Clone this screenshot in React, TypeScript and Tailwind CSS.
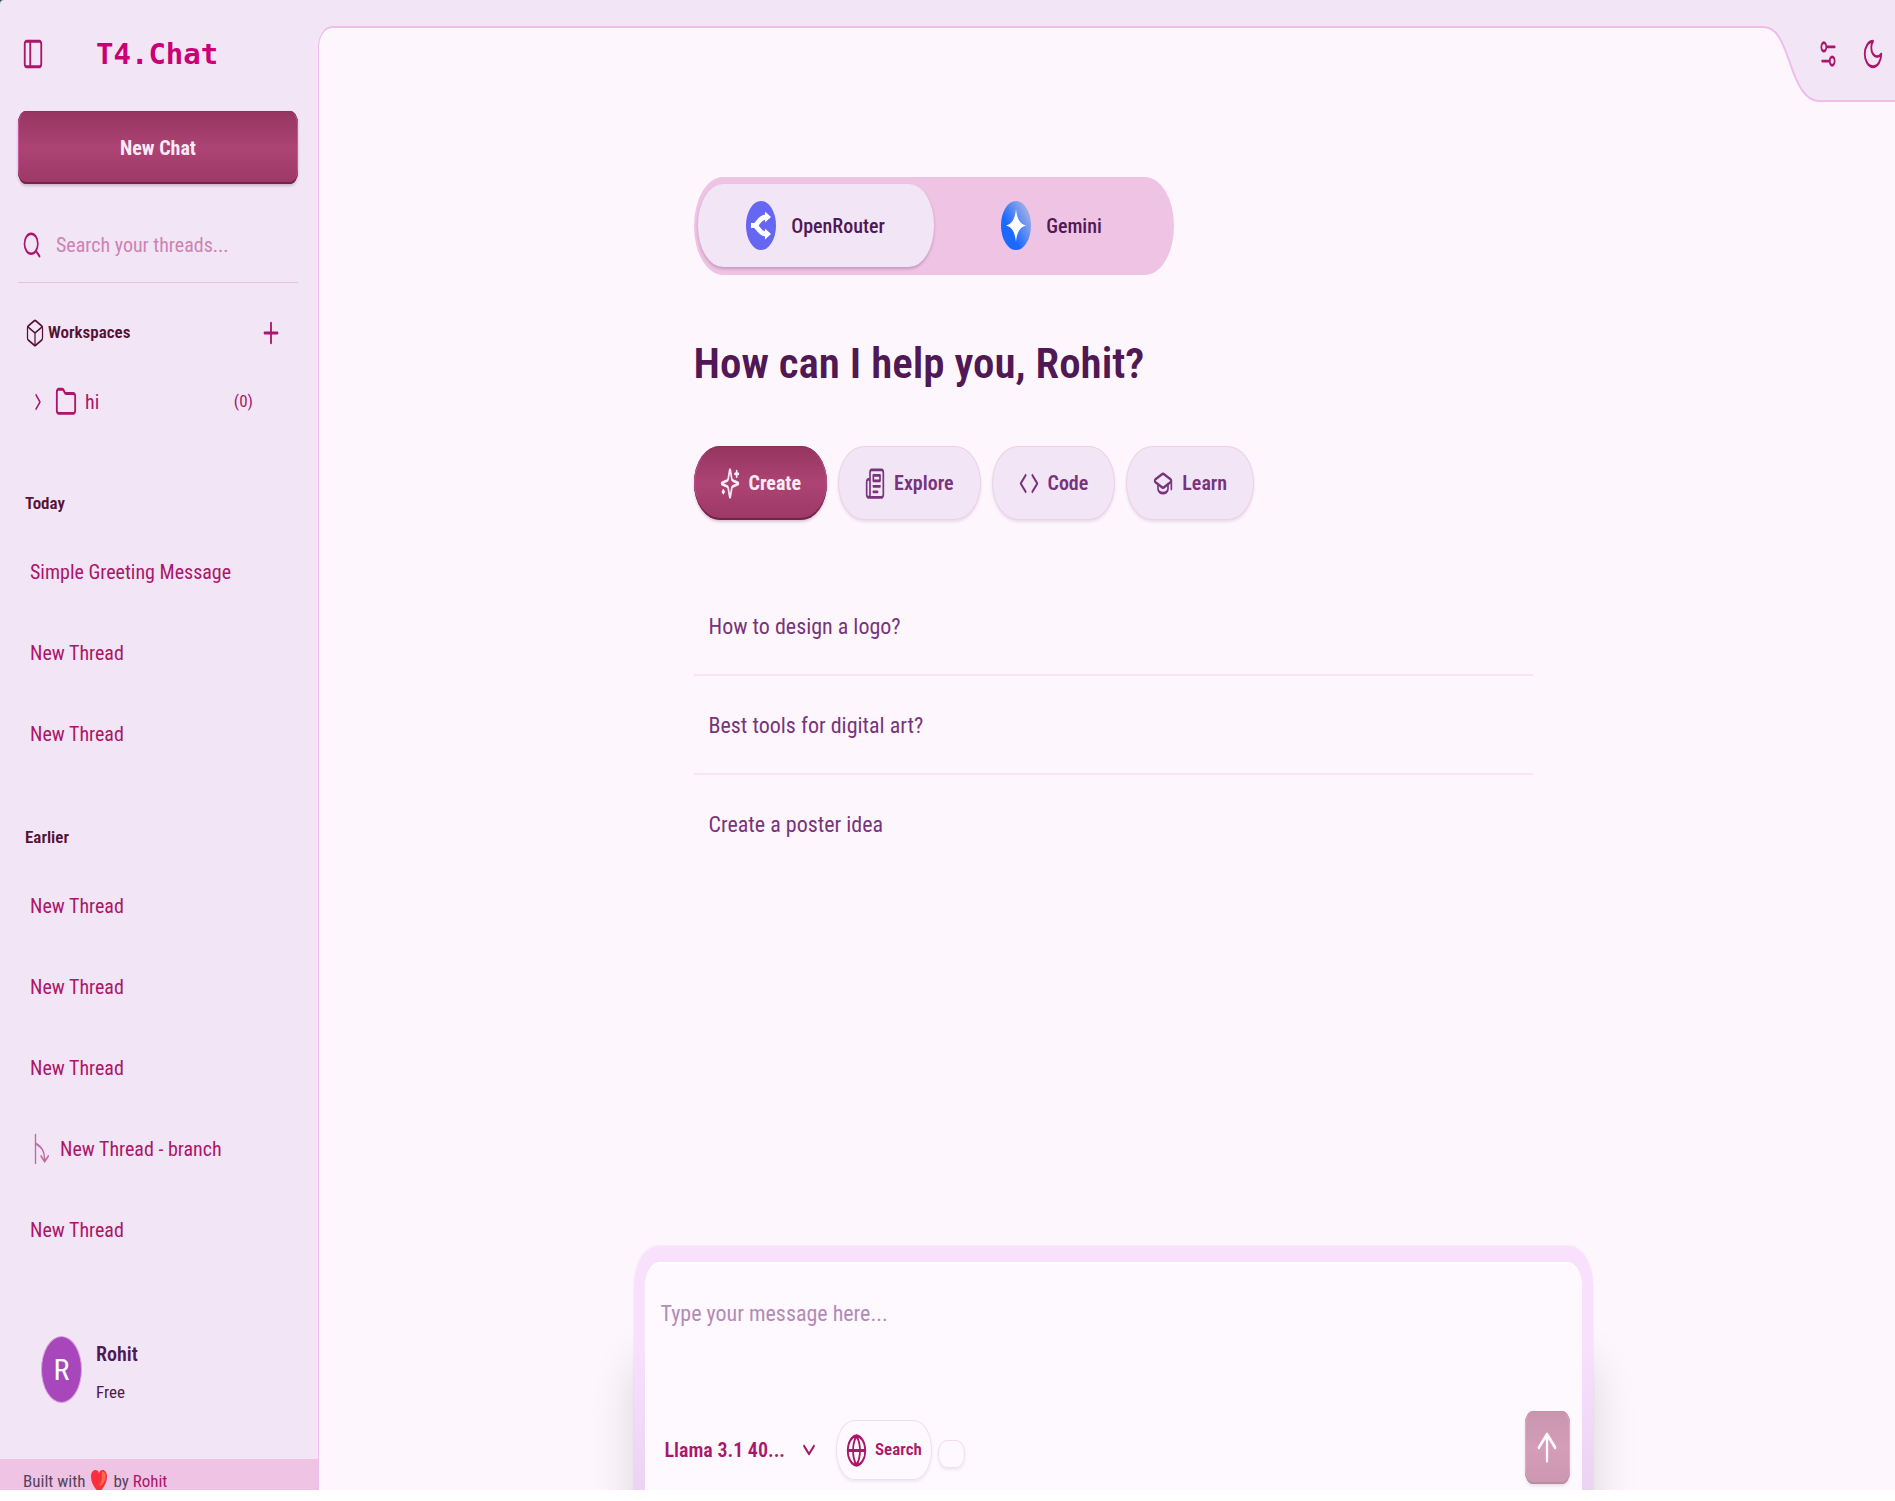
import React, { useState } from 'react';
import { clsx } from 'clsx';

type IconProps = {
  className?: string;
  children: React.ReactNode;
  strokeWidth?: number;
};

// Outline icon on a 24 unit grid, free to fill a tall box
function Icon({ className, children, strokeWidth = 2 }: IconProps) {
  return (
    <svg
      viewBox="0 0 24 24"
      preserveAspectRatio="none"
      fill="none"
      stroke="currentColor"
      strokeWidth={strokeWidth}
      strokeLinecap="round"
      strokeLinejoin="round"
      aria-hidden="true"
      className={clsx('shrink-0', className)}
    >
      {children}
    </svg>
  );
}

const primaryButton =
  'bg-linear-to-b from-[#963560] via-[#ac4374] to-[#9d3865] text-[#fdeaf6] font-bold shadow-[0_2px_3px_rgba(60,0,40,0.2),inset_0_-2px_0_#75234c,inset_0_1px_0_#8c3059,inset_-1px_0_0_#c757a0,inset_1px_0_0_#c757a0]';

const categories = [
  {
    label: 'Create',
    icon: (
      <Icon className="w-[20px] h-[33px]">
        <path d="M9.937 15.5A2 2 0 0 0 8.5 14.063l-6.135-1.582a.5.5 0 0 1 0-.962L8.5 9.936A2 2 0 0 0 9.937 8.5l1.582-6.135a.5.5 0 0 1 .963 0L14.063 8.5A2 2 0 0 0 15.5 9.937l6.135 1.581a.5.5 0 0 1 0 .964L15.5 14.063a2 2 0 0 0-1.437 1.437l-1.582 6.135a.5.5 0 0 1-.963 0z" />
        <path d="M20 3v4M22 5h-4M4 17v2M5 18H3" />
      </Icon>
    ),
  },
  {
    label: 'Explore',
    icon: (
      <Icon className="w-[20px] h-[33px]">
        <path d="M4 22h16a2 2 0 0 0 2-2V4a2 2 0 0 0-2-2H8a2 2 0 0 0-2 2v16a2 2 0 0 1-2 2Zm0 0a2 2 0 0 1-2-2v-9c0-1.100.9-2 2-2h2" />
        <path d="M18 14h-8M15 18h-5M10 6h8v4h-8V6Z" />
      </Icon>
    ),
  },
  {
    label: 'Code',
    icon: (
      <Icon className="w-[20px] h-[33px]">
        <path d="m16 18 6-6-6-6M8 6l-6 6 6 6" />
      </Icon>
    ),
  },
  {
    label: 'Learn',
    icon: (
      <Icon className="w-[20px] h-[33px]">
        <path d="M21.420 10.922a1 1 0 0 0-.019-1.838L12.830 5.180a2 2 0 0 0-1.660 0L2.600 9.080a1 1 0 0 0 0 1.832l8.570 3.908a2 2 0 0 0 1.660 0z" />
        <path d="M22 10v6M6 12.500V16a6 3 0 0 0 12 0v-3.500" />
      </Icon>
    ),
  },
];

const suggestions = ['How to design a logo?', 'Best tools for digital art?', 'Create a poster idea'];

const threadGroups = [
  {
    title: 'Today',
    className: 'mt-[62px]',
    threads: [
      { title: 'Simple Greeting Message' },
      { title: 'New Thread' },
      { title: 'New Thread' },
    ],
  },
  {
    title: 'Earlier',
    className: 'mt-[43px]',
    threads: [
      { title: 'New Thread' },
      { title: 'New Thread' },
      { title: 'New Thread' },
      { title: 'New Thread - branch', branch: true },
      { title: 'New Thread' },
    ],
  },
];

function Sidebar() {
  return (
    <aside className="w-[318px] shrink-0 flex flex-col text-[#ac1668]">
      <div className="h-[107px] px-[22px] flex items-center">
        <button type="button" aria-label="Toggle sidebar">
          <Icon className="w-[22px] h-[34px]">
            <rect width="18" height="18" x="3" y="3" rx="2" />
            <path d="M9 3v18" />
          </Icon>
        </button>
        <span className="ml-[52px] text-[29px] leading-[40px] font-bold text-[#cb0077] font-['DejaVu_Sans_Mono','Liberation_Mono',monospace]">
          T4.Chat
        </span>
      </div>

      <button
        type="button"
        className={clsx('mt-1 ml-[18px] mr-[20px] h-[73px] rounded-[8px/13px] text-[20px]', primaryButton)}
      >
        New Chat
      </button>

      <label className="mt-6 ml-[18px] mr-[20px] h-[75px] pl-1 flex items-center gap-[14px] border-b border-[#ecbfe0]">
        <Icon className="w-[20px] h-[30px]">
          <circle cx="11" cy="11" r="8" />
          <path d="m21 21-4.300-4.300" />
        </Icon>
        <input
          type="text"
          aria-label="Search your threads"
          placeholder="Search your threads..."
          className="min-w-0 flex-1 bg-transparent text-[20px] outline-none placeholder:text-[#ce82b2]"
        />
      </label>

      <div className="h-[100px] pl-[25px] pr-[36px] flex items-center text-[#561134]">
        <Icon className="w-[20px] h-[30px]" strokeWidth={1.5}>
          <path d="M21 8a2 2 0 0 0-1-1.730l-7-4a2 2 0 0 0-2 0l-7 4A2 2 0 0 0 3 8v8a2 2 0 0 0 1 1.730l7 4a2 2 0 0 0 2 0l7-4A2 2 0 0 0 21 16Z" />
          <path d="m3.300 7 8.700 5 8.700-5M12 22V12" />
        </Icon>
        <h2 className="ml-[3px] text-[17px] font-semibold">Workspaces</h2>
        <button type="button" aria-label="Add workspace" className="ml-auto text-[#ac1668]">
          <Icon className="w-[22px] h-[34px]">
            <path d="M5 12h14M12 5v14" />
          </Icon>
        </button>
      </div>

      <button type="button" className="h-[38px] pl-[30px] pr-[65px] flex items-center text-[20px]">
        <Icon className="w-[16px] h-[28px]">
          <path d="m9 18 6-6-6-6" />
        </Icon>
        <Icon className="ml-[9px] w-[22px] h-[34px]">
          <path d="M20 20a2 2 0 0 0 2-2V8a2 2 0 0 0-2-2h-7.900a2 2 0 0 1-1.690-.9L9.600 3.900A2 2 0 0 0 7.930 3H4a2 2 0 0 0-2 2v13a2 2 0 0 0 2 2Z" />
        </Icon>
        <span className="ml-2">hi</span>
        <span className="ml-auto text-[17px]">(0)</span>
      </button>

      {threadGroups.map((group) => (
        <section key={group.title} className={group.className}>
          <h2 className="h-[48px] pb-[6px] pl-[25px] flex items-center text-[17px] font-semibold text-[#561134]">
            {group.title}
          </h2>
          <ul>
            {group.threads.map((thread, i) => (
              <li key={i}>
                <a href="#" className="h-[81px] pl-[30px] flex items-center text-[20px]">
                  {'branch' in thread && (
                    <Icon className="mr-[8px] w-[22px] h-[34px] opacity-60" strokeWidth={1.5}>
                      <path d="M6 2v20M6 8c7 3 10 5 10 13M12 17l4 4 4-4" />
                    </Icon>
                  )}
                  {thread.title}
                </a>
              </li>
            ))}
          </ul>
        </section>
      ))}

      <div className="mt-[57px] pl-[41px] flex items-center gap-[14px] text-[#501854]">
        <div className="w-[41px] h-[67px] rounded-[50%] bg-[#a846bb] border border-[#d9a5dc] flex items-center justify-center text-[30px] text-white">
          R
        </div>
        <div className="pt-2">
          <p className="text-[20px] leading-[38px] font-semibold">Rohit</p>
          <p className="text-[17px] leading-[38px]">Free</p>
        </div>
      </div>

      <footer className="mt-12 h-[31px] pl-[23px] overflow-hidden bg-[#efc3e4] text-[17px] leading-[44px] text-[#54445e] flex">
        Built with
        <svg viewBox="0 0 16 24" className="mt-[11px] mx-[6px] w-[16px] h-[24px]" role="img" aria-label="love">
          <path
            d="M8 23C3 17 0 13 0 6.500C0 2.500 2 0 4.500 0C6.200 0 7.400 1.200 8 3C8.600 1.200 9.800 0 11.500 0C14 0 16 2.500 16 6.500C16 13 13 17 8 23Z"
            fill="#f8303e"
          />
          <path d="M11 1.500C14 1 15.500 5 14 10C13 13 10 16 8 16C11 12 11 7 11 1.500Z" fill="#ff6a4f" />
        </svg>
        by&nbsp;
        <a href="#" className="text-[#ac1668]">Rohit</a>
      </footer>
    </aside>
  );
}

// Curved notch over the panel's corner that carries the page controls
function CornerControls() {
  return (
    <div className="absolute top-0 right-0 flex text-[#ac1668]">
      <svg viewBox="0 0 55 103" className="w-[55px] h-[103px]" aria-hidden="true">
        <path d="M0 0H55V101C42 101 34 86 27 65C20 44 15 28 0 28Z" fill="#f2e5f5" />
        <path d="M0 27C15 27 20 44 27 63C34 84 42 101 56 101" fill="none" stroke="#efbdeb" strokeWidth="2" />
      </svg>
      <div className="w-[77px] h-[102px] bg-[#f2e5f5] border-b-2 border-[#efbdeb] flex justify-between pr-[11px] pt-[37px]">
        <button type="button" aria-label="Settings" className="h-[34px]">
          <Icon className="w-[20px] h-[34px]">
            <path d="M20 7h-9M14 17H5" />
            <circle cx="17" cy="17" r="3" />
            <circle cx="7" cy="7" r="3" />
          </Icon>
        </button>
        <button type="button" aria-label="Toggle theme" className="h-[34px]">
          <Icon className="w-[22px] h-[34px]">
            <path d="M12 3a6 6 0 0 0 9 9 9 9 0 1 1-9-9Z" />
          </Icon>
        </button>
      </div>
    </div>
  );
}

function ProviderTabs() {
  const [active, setActive] = useState('OpenRouter');

  const providers = [
    {
      name: 'OpenRouter',
      logo: (
        <svg viewBox="0 0 30 49" className="w-[30px] h-[49px]" aria-hidden="true">
          <ellipse cx="15" cy="24.500" rx="15" ry="24.500" fill="#6566f1" />
          <path d="M5 24.500H8C12 24.500 13 16 20 16" fill="none" stroke="#fff" strokeWidth="5" />
          <path d="M8 24.500C12 24.500 13 33 20 33" fill="none" stroke="#fff" strokeWidth="5" />
          <path d="M19 10.500L25 16L19 21.500ZM19 27.500L25 33L19 38.500Z" fill="#fff" />
        </svg>
      ),
    },
    {
      name: 'Gemini',
      logo: (
        <svg viewBox="0 0 30 49" className="w-[30px] h-[49px]" aria-hidden="true">
          <defs>
            <linearGradient id="gemini" x1="0.3" y1="0.6" x2="0.9" y2="0.1">
              <stop offset="0" stopColor="#1b69ff" />
              <stop offset="1" stopColor="#a9b4e4" />
            </linearGradient>
          </defs>
          <ellipse cx="15" cy="24.500" rx="15" ry="24.500" fill="url(#gemini)" />
          <path d="M15 8C16 18 19 23 25 24.500C19 26 16 31 15 41C14 31 11 26 5 24.500C11 23 14 18 15 8Z" fill="#fff" />
        </svg>
      ),
    },
  ];

  return (
    <div className="w-[480px] h-[98px] pt-[7px] pb-2 px-1 flex rounded-[29px/49px] bg-[#efc3e4]">
      {providers.map(({ name, logo }) => (
        <button
          key={name}
          type="button"
          aria-pressed={active === name}
          onClick={() => setActive(name)}
          className={clsx(
            'flex-1 flex items-center justify-center gap-[15px] rounded-[25px/41px] text-[20px] font-medium text-[#501854]',
            active === name && 'bg-[#f2e5f5] shadow-[0_2px_3px_rgba(80,24,84,0.25)]'
          )}
        >
          {logo}
          {name}
        </button>
      ))}
    </div>
  );
}

function Composer() {
  return (
    <form className="mt-auto max-w-[959px] w-full mx-auto pt-4 px-[11px] rounded-t-[24px_40px] bg-linear-to-b from-[#f9e0fd] from-40% to-[#ecd3f2] shadow-[0_110px_45px_rgba(0,0,0,0.14),0_0_2px_rgba(80,24,84,0.12)]">
      <div className="rounded-t-[15px_24px] bg-[#fdf9fe] border-t-2 border-white">
        <textarea
          aria-label="Message"
          placeholder="Type your message here..."
          className="block w-full h-[146px] pt-[34px] px-4 resize-none bg-transparent text-[22px] leading-[32px] text-[#501854] outline-none placeholder:text-[#b48ab8]"
        />
        <div className="h-[80px] pl-5 pr-[12px] flex items-center text-[#ac1668]">
          <button type="button" className="flex items-center gap-[14px] text-[20px] font-semibold">
            Llama 3.1 40...
            <Icon className="w-[20px] h-[32px]">
              <path d="m6 9 6 6 6-6" />
            </Icon>
          </button>
          <button
            type="button"
            className="ml-[17px] h-[60px] px-[9px] flex items-center gap-[8px] rounded-[18px/30px] border border-[#efdfee] shadow-[0_2px_3px_rgba(80,24,84,0.08)] text-[17px] font-semibold"
          >
            <Icon className="w-[21px] h-[35px]">
              <circle cx="12" cy="12" r="10" />
              <path d="M12 2a14.500 14.500 0 0 0 0 20 14.500 14.500 0 0 0 0-20M2 12h20" />
            </Icon>
            Search
          </button>
          <button
            type="button"
            aria-label="Attach"
            className="ml-[6px] mt-[7px] w-[27px] h-[28px] rounded-[9px/13px] border border-[#efdfee] shadow-[0_2px_3px_rgba(80,24,84,0.08)]"
          />
          <button
            type="submit"
            aria-label="Send"
            className={clsx(
              'ml-auto mb-[6px] w-[45px] h-[73px] rounded-[8px/13px] flex items-center justify-center opacity-50',
              primaryButton
            )}
          >
            <Icon className="w-[28px] h-[45px] text-white">
              <path d="m5 12 7-7 7 7M12 19V5" />
            </Icon>
          </button>
        </div>
      </div>
    </form>
  );
}

export default function App() {
  const [category, setCategory] = useState('Create');

  return (
    <div className="bg-[#3d4f63]">
      <div className="relative flex rounded-tl-[4px] bg-[#f2e5f5] font-['Roboto_Condensed',Roboto,'Liberation_Sans',sans-serif]">
        <Sidebar />
        <main className="mt-[26px] min-w-0 flex-1 flex flex-col overflow-hidden rounded-tl-[14px_22px] border-l border-t-2 border-[#efbdeb] bg-[#fdf7fd] pl-[12px]">
          <div className="w-full max-w-[839px] mx-auto pt-[149px] pb-8">
            <ProviderTabs />
            <h1 className="mt-[52px] text-[43px] leading-[72px] font-semibold text-[#501854]">
              How can I help you, Rohit?
            </h1>
            <div className="mt-[47px] flex gap-[11px]">
              {categories.map(({ label, icon }) => (
                <button
                  key={label}
                  type="button"
                  aria-pressed={category === label}
                  onClick={() => setCategory(label)}
                  className={clsx(
                    'h-[74px] px-[26px] flex items-center gap-[9px] rounded-[26px/37px] text-[20px]',
                    category === label
                      ? primaryButton
                      : 'bg-[#f2e5f5] border border-[#efd0e8] font-semibold text-[#77347c] shadow-[0_2px_3px_rgba(80,24,84,0.12)]'
                  )}
                >
                  {icon}
                  {label}
                </button>
              ))}
            </div>
            <ul className="mt-[57px] divide-y-2 divide-[#fae4f3]">
              {suggestions.map((text) => (
                <li key={text}>
                  <button type="button" className="w-full h-[97px] pt-[2px] px-[15px] text-left text-[22px] text-[#77347c]">
                    {text}
                  </button>
                </li>
              ))}
            </ul>
          </div>
          <Composer />
        </main>
        <CornerControls />
      </div>
    </div>
  );
}
